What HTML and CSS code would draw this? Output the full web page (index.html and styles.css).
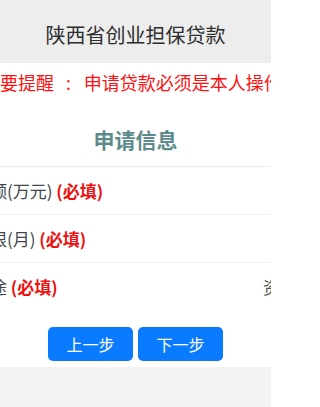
FILE: index.html
```html
<!DOCTYPE html>
<html lang="zh-CN">
<head>
<meta charset="utf-8">
<title>陕西省创业担保贷款</title>
<link rel="stylesheet" href="styles.css">
</head>
<body>
<div class="page">
  <header class="topbar">陕西省创业担保贷款</header>
  <div class="notice"><span class="notice-text">重要提醒<span class="colon">:</span>申请贷款必须是本人操作</span></div>
  <h2 class="section-title">申请信息</h2>
  <div class="form">
    <div class="row">
      <span class="label">贷款金额(万元) <b class="req">(必填)</b></span>
      <span class="value"></span>
    </div>
    <div class="row">
      <span class="label">贷款期限(月) <b class="req">(必填)</b></span>
      <span class="value"></span>
    </div>
    <div class="row last">
      <span class="label">贷款用途 <b class="req">(必填)</b></span>
      <span class="value">资金周转</span>
    </div>
  </div>
  <div class="actions">
    <button class="btn">上一步</button>
    <button class="btn">下一步</button>
  </div>
  <footer class="footer"></footer>
</div>
</body>
</html>
```
FILE: styles.css
```css
html, body {
  margin: 0;
  padding: 0;
  background: #ffffff;
}
body {
  font-family: "Noto Sans CJK SC", "Noto Sans", sans-serif;
  overflow: hidden;
}
.page {
  width: 271px;
  min-height: 407px;
  display: flex;
  flex-direction: column;
  overflow: hidden;
}
.topbar {
  height: 63px;
  background: #ededed;
  color: #2e2e2e;
  font-size: 20px;
  display: flex;
  align-items: center;
  justify-content: center;
  padding-top: 5px;
  box-sizing: border-box;
}
.notice {
  height: 38px;
  line-height: 38px;
  white-space: nowrap;
  overflow: hidden;
  color: #ff1111;
  font-size: 18px;
}
.notice-text {
  display: inline-block;
  margin-left: -18px;
}
.colon {
  font-family: "Noto Sans", sans-serif;
  padding: 0 13px 0 12px;
}
.section-title {
  margin: 0;
  padding: 22px 0 11px;
  line-height: 32px;
  font-size: 21px;
  font-weight: bold;
  color: #5d8a8b;
  text-align: center;
  border-bottom: 1px solid #ececec;
}
.form {
  display: flex;
  flex-direction: column;
}
.row {
  height: 47px;
  display: flex;
  align-items: center;
  border-bottom: 1px solid #efefef;
  font-size: 17px;
  white-space: nowrap;
  overflow: hidden;
}
.row.last {
  border-bottom: none;
}
.label {
  margin-left: -61px;
  color: #40464b;
}
.req {
  color: #ee0f0f;
  font-weight: bold;
}
.value {
  margin-left: auto;
  flex: 0 0 8px;
  width: 8px;
  min-width: 0;
  color: #555555;
  overflow: visible;
}
.actions {
  display: flex;
  justify-content: center;
  gap: 5px;
  margin-top: 17px;
  margin-bottom: 6px;
}
.btn {
  width: 85px;
  height: 34px;
  border: none;
  border-radius: 5px;
  background: #0a7bff;
  color: #ffffff;
  font-family: "Noto Sans CJK SC", sans-serif;
  font-size: 16px;
  padding: 0;
}
.footer {
  flex: 1;
  background: #f4f3f1;
  min-height: 40px;
}
```
